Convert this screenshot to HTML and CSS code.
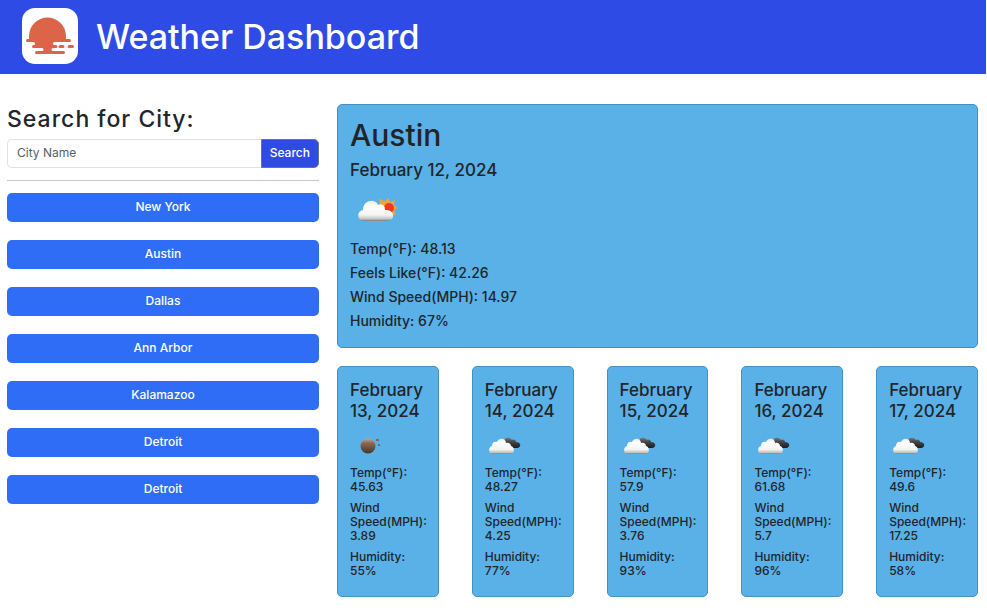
FILE: index.html
```html
<!DOCTYPE html>
<html lang="en">
<head>
<meta charset="utf-8">
<meta name="viewport" content="width=device-width, initial-scale=1">
<title>Weather Dashboard</title>
<link rel="stylesheet" href="styles.css">
</head>
<body>
<svg class="defs" aria-hidden="true">
  <defs>
    <linearGradient id="white-cloud" x1="0" y1="0" x2="0" y2="1">
      <stop offset="0" stop-color="#e8e8ec"/>
      <stop offset=".25" stop-color="#ffffff"/>
      <stop offset=".7" stop-color="#f4f4f4"/>
      <stop offset=".9" stop-color="#c4c4c6"/>
      <stop offset="1" stop-color="#77797c"/>
    </linearGradient>
    <linearGradient id="dark-cloud" x1="0" y1="0" x2="0" y2="1">
      <stop offset="0" stop-color="#77777a"/>
      <stop offset=".4" stop-color="#454547"/>
      <stop offset="1" stop-color="#1c1c1e"/>
    </linearGradient>
    <linearGradient id="moon-fill" x1="0" y1="0" x2="0" y2="1">
      <stop offset="0" stop-color="#c0a898"/>
      <stop offset=".3" stop-color="#8a6a54"/>
      <stop offset="1" stop-color="#4a3426"/>
    </linearGradient>
    <symbol id="few-clouds" viewBox="0 0 40 24">
      <path fill="#e9a641" d="M30 0l2 4 5-2-1 5 4 3-4 2 2 5-5-1-2 4-4-3-6-5-2-4 3-2-1-5 6 2z"/>
      <circle cx="31" cy="10" r="5" fill="#ee3a20"/>
      <path fill="url(#white-cloud)" d="M6 23C-1 23-2 13 5 12 5 2 17 0 20 7c4-2 7 0 7 5 10-1 11 11 2 11z"/>
    </symbol>
    <symbol id="broken-clouds" viewBox="0 0 32 18">
      <path fill="url(#dark-cloud)" d="M15 6C14 1 20-1 23 3c2-1 4 0 4 2 6 0 5 6 1 6h-8z"/>
      <path fill="url(#white-cloud)" d="M4 17C-1 17-1 10 3 9 3 5 6 4 8 5 10 0 17 1 17 6c3-1 5 1 5 3 4 1 4 8-1 8z"/>
    </symbol>
    <symbol id="clear-night" viewBox="0 0 22 18">
      <circle cx="8" cy="9" r="7.5" fill="url(#moon-fill)"/>
      <path fill="#79685b" d="M16 2h3v2h-3zM18 7h2v2h-2z"/>
    </symbol>
  </defs>
</svg>

<header class="banner">
  <svg class="logo" viewBox="0 0 56 56" role="img" aria-label="Sunset">
    <rect width="56" height="56" rx="13" fill="#fff"/>
    <path fill="#dc6549" d="M7 31V28a18.500 18.500 0 0 1 37 0v3h3.500a1.500 1.500 0 0 1 0 3H32.500a1.500 1.500 0 0 0 0 3H34a1.500 1.500 0 0 1 0 3h-3a1.500 1.500 0 0 0 0 3h10.500a1.500 1.500 0 0 1 0 3h-27a1.500 1.500 0 0 1 0-3H20a1.500 1.500 0 0 0 0-3h-8.500a1.500 1.500 0 0 1 0-3a1.500 1.500 0 0 0 0-3h-6a1.500 1.500 0 0 1 0-3z"/>
    <path stroke="#dc6549" stroke-width="3" stroke-linecap="round" d="M38 38.500h3M47 38.500h3.500"/>
  </svg>
  <h1 class="banner-title">Weather Dashboard</h1>
</header>

<div class="layout">
  <aside class="sidebar">
    <form class="search">
      <label class="search-label" for="city">Search for City:</label>
      <div class="search-row">
        <input class="search-input" id="city" type="text" placeholder="City Name">
        <button class="search-button" type="button">Search</button>
      </div>
    </form>
    <div class="history">
      <button class="history-button" type="button">New York</button>
      <button class="history-button" type="button">Austin</button>
      <button class="history-button" type="button">Dallas</button>
      <button class="history-button" type="button">Ann Arbor</button>
      <button class="history-button" type="button">Kalamazoo</button>
      <button class="history-button" type="button">Detroit</button>
      <button class="history-button" type="button">Detroit</button>
    </div>
  </aside>

  <main class="content">
    <section class="card current">
      <h2 class="city">Austin</h2>
      <h3 class="date">February 12, 2024</h3>
      <svg class="current-icon" role="img" aria-label="Few clouds"><use href="#few-clouds"/></svg>
      <p class="reading">Temp(°F): 48.13</p>
      <p class="reading">Feels Like(°F): 42.26</p>
      <p class="reading">Wind Speed(MPH): 14.97</p>
      <p class="reading">Humidity: 67%</p>
    </section>
    <section class="forecast">
      <article class="card day">
        <h3 class="date">February 13, 2024</h3>
        <svg class="day-icon moon" role="img" aria-label="Clear"><use href="#clear-night"/></svg>
        <p class="detail">Temp(°F): 45.63</p>
        <p class="detail">Wind Speed(MPH): 3.89</p>
        <p class="detail">Humidity: 55%</p>
      </article>
      <article class="card day">
        <h3 class="date">February 14, 2024</h3>
        <svg class="day-icon" role="img" aria-label="Broken clouds"><use href="#broken-clouds"/></svg>
        <p class="detail">Temp(°F): 48.27</p>
        <p class="detail">Wind Speed(MPH): 4.25</p>
        <p class="detail">Humidity: 77%</p>
      </article>
      <article class="card day">
        <h3 class="date">February 15, 2024</h3>
        <svg class="day-icon" role="img" aria-label="Broken clouds"><use href="#broken-clouds"/></svg>
        <p class="detail">Temp(°F): 57.9</p>
        <p class="detail">Wind Speed(MPH): 3.76</p>
        <p class="detail">Humidity: 93%</p>
      </article>
      <article class="card day">
        <h3 class="date">February 16, 2024</h3>
        <svg class="day-icon" role="img" aria-label="Broken clouds"><use href="#broken-clouds"/></svg>
        <p class="detail">Temp(°F): 61.68</p>
        <p class="detail">Wind Speed(MPH): 5.7</p>
        <p class="detail">Humidity: 96%</p>
      </article>
      <article class="card day">
        <h3 class="date">February 17, 2024</h3>
        <svg class="day-icon" role="img" aria-label="Broken clouds"><use href="#broken-clouds"/></svg>
        <p class="detail">Temp(°F): 49.6</p>
        <p class="detail">Wind Speed(MPH): 17.25</p>
        <p class="detail">Humidity: 58%</p>
      </article>
    </section>
  </main>
</div>
</body>
</html>
```
FILE: styles.css
```css
* {
  box-sizing: border-box;
}

body {
  margin: 0;
  background: #fff;
  color: #212529;
  font-family: Inter, "Liberation Sans", sans-serif;
}

h1, h2, h3, p {
  margin: 0;
  font-weight: 500;
}

button, input {
  font-family: inherit;
  font-size: 12px;
}

.defs {
  position: absolute;
  width: 0;
  height: 0;
}

.banner {
  display: flex;
  align-items: center;
  gap: 18px;
  margin-right: 1px;
  padding: 8px 22px 10px;
  background: #2f4be5;
  color: #fff;
}

.logo {
  width: 56px;
  height: 56px;
}

.banner-title {
  padding-top: 2px;
  font-size: 34px;
  line-height: 44px;
}

.layout {
  display: grid;
  grid-template-columns: minmax(0, 312fr) minmax(0, 641fr);
  gap: 18px;
  padding: 30px 9px 17px 7px;
}

.search {
  padding-bottom: 12px;
  border-bottom: 1px solid #c4c6c8;
}

.search-label {
  display: block;
  margin-bottom: 4px;
  font-size: 23px;
  font-weight: 500;
  letter-spacing: 1px;
  line-height: 31px;
}

.search-row {
  display: flex;
}

.search-input {
  flex: 1;
  min-width: 0;
  height: 29px;
  padding: 0 9px 2px;
  border: 1px solid #dee2e6;
  border-right: 0;
  border-radius: 5px 0 0 5px;
  color: #212529;
}

.search-input::placeholder {
  color: #595f65;
}

.search-button {
  height: 29px;
  padding: 0 8px 2px;
  border: 1px solid #6c757d;
  border-radius: 0 5px 5px 0;
  background: #2f4be5;
  color: #fff;
  font-weight: 500;
}

.history {
  display: grid;
  gap: 18px;
  padding-top: 12px;
}

.history-button {
  height: 29px;
  padding: 0 8px 2px;
  border: 0;
  border-radius: 5px;
  background: #306df7;
  color: #fff;
  font-weight: 500;
}

.content {
  display: grid;
  gap: 18px;
}

.card {
  padding: 12px;
  border: 1px solid #4590c0;
  border-radius: 5px;
  background: #59b1e8;
}

.current {
  padding-bottom: 11px;
}

.city {
  margin-bottom: 7px;
  font-size: 30px;
  line-height: 36px;
}

.date {
  font-size: 17px;
  line-height: 21px;
}

.current-icon {
  display: block;
  width: 40px;
  height: 24px;
  margin: 17px 8px 18px;
}

.reading {
  padding-bottom: 6px;
  font-size: 14px;
  line-height: 18px;
}

.forecast {
  display: grid;
  grid-template-columns: repeat(5, minmax(0, 1fr));
  gap: 33px;
}

.day {
  padding-top: 13px;
  padding-bottom: 11px;
}

.day-icon {
  display: block;
  width: 32px;
  height: 18px;
  margin: 15px 4px 11px;
}

.day-icon.moon {
  width: 22px;
  margin-left: 10px;
}

.detail {
  padding-bottom: 7px;
  font-size: 12px;
  line-height: 14px;
}
```
